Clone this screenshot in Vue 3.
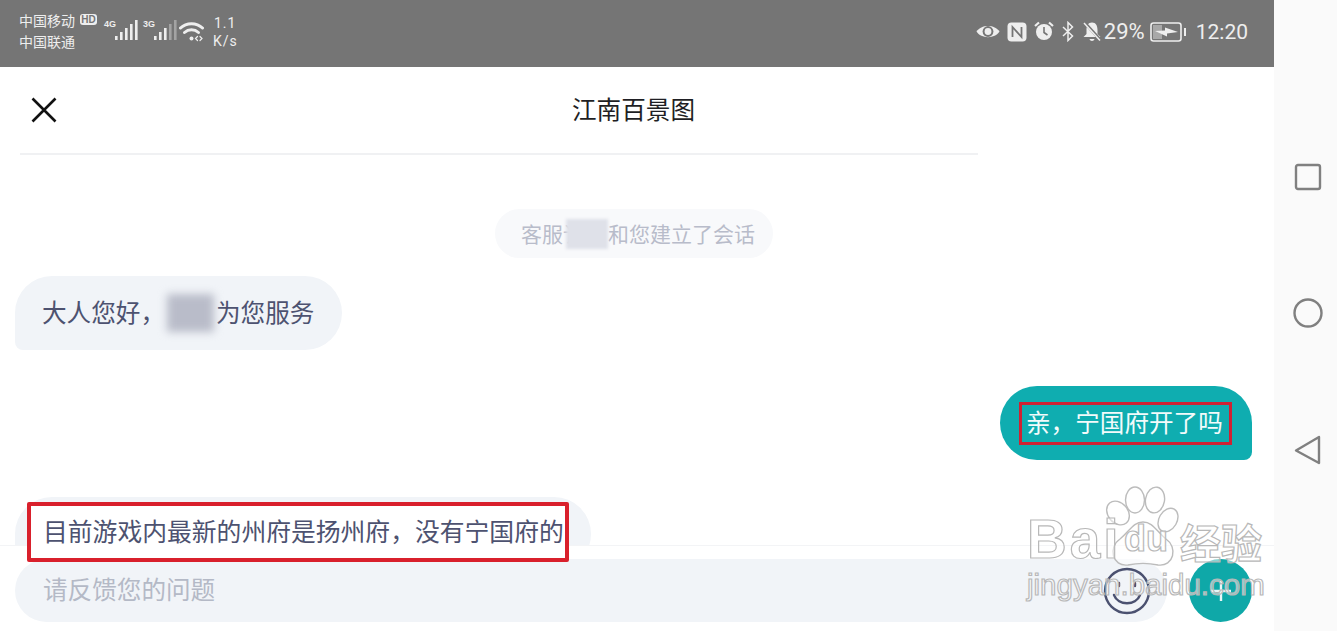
<script setup>
const signalBars = [
  { x: 0, h: 4 },
  { x: 5, h: 8 },
  { x: 10, h: 12 },
  { x: 15, h: 16 },
  { x: 20, h: 20 }
]
</script>

<template>
  <div class="screen">
    <div class="phone">
      <div class="status-bar">
        <div class="status-left">
          <div class="carriers">
            <div class="carrier-row">
              <span>中国移动</span>
              <span class="hd">HD</span>
            </div>
            <div class="carrier-row">中国联通</div>
          </div>
          <div class="net">
            <span class="net-label">4G</span>
            <svg class="bars" width="23" height="22" viewBox="0 0 23 22">
              <rect v-for="b in signalBars" :key="b.x" :x="b.x" :y="21 - b.h" width="2.6" :height="b.h" fill="#eee" />
            </svg>
          </div>
          <div class="net net-second">
            <span class="net-label">3G</span>
            <svg class="bars" width="23" height="22" viewBox="0 0 23 22">
              <rect v-for="b in signalBars" :key="b.x" :x="b.x" :y="21 - b.h" width="2.6" :height="b.h" :fill="b.x > 10 ? '#a3a3a3' : '#eee'" />
            </svg>
          </div>
          <svg class="wifi" width="25" height="21" viewBox="0 0 25 21" fill="none" stroke="#eee" stroke-width="3" stroke-linecap="round">
            <path d="M1.5 7 C7.5 1.2 17.5 1.2 23.5 7" />
            <path d="M5.5 11.500 C9.5 7.9 15.5 7.9 19.5 11.500" />
            <circle cx="12.500" cy="17.500" r="2" fill="#eee" stroke="none" />
            <path d="M18.5 15.500 L16.5 17.500 L18.5 19.500 M21 15.500 L23 17.500 L21 19.500" stroke-width="1.2" />
          </svg>
          <div class="speed">
            <div class="speed-num">1.1</div>
            <div>K/s</div>
          </div>
        </div>
        <div class="status-right">
          <svg width="24" height="17" viewBox="0 0 24 17">
            <path d="M0.5 8.5 C5 1 19 1 23.5 8.5 C19 16 5 16 0.5 8.5 Z" fill="#eee" />
            <circle cx="12" cy="8.5" r="5.4" fill="#757575" />
            <circle cx="12" cy="8.5" r="3.4" fill="#eee" />
          </svg>
          <svg class="gap-7" width="20" height="20" viewBox="0 0 20 20">
            <rect x="0.5" y="0.5" width="19" height="19" rx="4" fill="#eee" />
            <path d="M5.5 15 V5 L14.5 15 V5" fill="none" stroke="#757575" stroke-width="1.8" />
          </svg>
          <svg class="gap-7" width="20" height="21" viewBox="0 0 20 21">
            <circle cx="10" cy="11" r="8" fill="#eee" />
            <path d="M10 6 V11.5 L13.5 14" fill="none" stroke="#757575" stroke-width="1.6" />
            <path d="M1 5 L5 1.5 M19 5 L15 1.5" stroke="#eee" stroke-width="2.2" />
          </svg>
          <svg class="gap-8" width="12" height="21" viewBox="0 0 12 21" fill="none" stroke="#eee" stroke-width="1.5">
            <path d="M1 6 L10.5 15 L6 19.5 V1.5 L10.5 6 L1 15" />
          </svg>
          <svg class="gap-8" width="20" height="21" viewBox="0 0 20 21">
            <path d="M10 1.5 C14 1.5 15.5 5 15.5 9 V13 L18.5 16 H1.5 L4.5 13 V9 C4.5 5 6 1.5 10 1.5 Z" fill="#eee" />
            <path d="M7.5 18 H12.5 C12 20.5 8 20.5 7.5 18 Z" fill="#eee" />
            <path d="M2.5 1.5 L18.5 19" stroke="#757575" stroke-width="3" />
            <path d="M2 2 L18 19.5" stroke="#eee" stroke-width="1.5" />
          </svg>
          <span class="percent">29%</span>
          <svg class="gap-5" width="36" height="20" viewBox="0 0 36 20">
            <rect x="1" y="1" width="30" height="18" rx="2.5" fill="none" stroke="#eee" stroke-width="1.6" />
            <rect x="3" y="3" width="9" height="14" fill="#a8a8a8" />
            <path d="M5 9 L15 8.500 L15 5.500 L28 10 L17 11.500 L17 14.500 Z" fill="#eee" />
            <rect x="34" y="6" width="2" height="8" fill="#eee" />
          </svg>
          <span class="clock">12:20</span>
        </div>
      </div>

      <header class="head">
        <svg class="close" width="26" height="26" viewBox="0 0 26 26" fill="none" stroke="#111" stroke-width="2.6">
          <path d="M1.5 1.5 L24.5 24.5 M24.5 1.5 L1.5 24.5" />
        </svg>
        <h1 class="title">江南百景图</h1>
      </header>
      <div class="head-line"></div>

      <main class="messages">
        <div class="system">
          <span class="system-pill">客服讠<span class="blur-small"></span>和您建立了会话</span>
        </div>
        <div class="bubble from-them first">大人您好，<span class="blur-name"></span>为您服务</div>
        <div class="bubble from-me">
          <span class="mark">亲，宁国府开了吗</span>
        </div>
        <div class="bubble from-them third"></div>
      </main>

      <footer class="composer">
        <div class="input">
          <span class="placeholder">请反馈您的问题</span>
          <svg class="smile" width="48" height="48" viewBox="0 0 48 48" fill="none" stroke="#4b5170" stroke-width="2.4">
            <circle cx="24" cy="24" r="22" />
            <path d="M11 28 C15 39 33 39 37 28" stroke-linecap="round" />
            <path d="M16 16 V19 M32 16 V19" stroke-linecap="round" />
          </svg>
        </div>
        <button class="plus">
          <svg width="24" height="24" viewBox="0 0 24 24" stroke="#e8f7f7" stroke-width="2.4">
            <path d="M12 2 V22 M2 12 H22" />
          </svg>
        </button>
      </footer>

      <!-- red annotation box drawn over the cut off reply -->
      <div class="annotation">目前游戏内最新的州府是扬州府，没有宁国府的</div>
    </div>

    <aside class="nav">
      <svg width="28" height="28" viewBox="0 0 28 28" fill="none" stroke="#808080" stroke-width="2.4">
        <rect x="2" y="2" width="24" height="24" rx="2" />
      </svg>
      <svg width="30" height="30" viewBox="0 0 30 30" fill="none" stroke="#808080" stroke-width="2.4">
        <circle cx="15" cy="15" r="13.5" />
      </svg>
      <svg width="28" height="30" viewBox="0 0 28 30" fill="none" stroke="#808080" stroke-width="2.4" stroke-linejoin="round">
        <path d="M25 2 L2 15.500 L25 28 Z" />
      </svg>
    </aside>

    <!-- baidu jingyan watermark -->
    <div class="watermark">
      <svg class="paw" width="90" height="84" viewBox="0 0 90 84" fill="rgba(255,255,255,.55)" stroke="#bcbcbc" stroke-width="1.4">
        <ellipse cx="14" cy="28" rx="10" ry="13" transform="rotate(-40 14 28)" />
        <ellipse cx="31" cy="15" rx="9.500" ry="13" />
        <ellipse cx="51" cy="15" rx="9.500" ry="13" transform="rotate(10 51 15)" />
        <ellipse cx="64" cy="35" rx="9" ry="12.500" transform="rotate(30 64 35)" />
        <path d="M39 37 C49 37 52 46 62 54 C74 62 70 82 54 80 C45 78 33 78 24 80 C8 82 4 62 16 54 C26 46 29 37 39 37 Z" />
      </svg>
      <span class="wm wm-bai">Bai</span>
      <span class="wm wm-du">du</span>
      <span class="wm wm-cn">经验</span>
      <span class="wm wm-url">jingyan.baidu.com</span>
    </div>
  </div>
</template>

<style scoped>
.screen {
  position: relative;
  display: flex;
  width: 1337px;
  height: 631px;
  overflow: hidden;
  background: #fff;
  font-family: "Noto Sans CJK SC", "Noto Sans", sans-serif;
}
.phone {
  position: relative;
  display: flex;
  flex-direction: column;
  width: 1274px;
  height: 631px;
}

/* status bar */
.status-bar {
  display: flex;
  justify-content: space-between;
  align-items: center;
  flex: none;
  height: 67px;
  box-sizing: border-box;
  padding: 0 26px 0 19px;
  background: #757575;
  color: #eee;
}
.status-left {
  display: flex;
  align-items: center;
  margin-top: -7px;
}
.carriers {
  display: flex;
  flex-direction: column;
  gap: 3px;
  width: 85px;
  font-size: 14px;
  line-height: 18px;
}
.carrier-row {
  display: flex;
  align-items: center;
  gap: 5px;
  white-space: nowrap;
}
.hd {
  width: 17px;
  height: 11px;
  border-radius: 3px;
  background: #eee;
  color: #757575;
  font-family: "Liberation Sans", sans-serif;
  font-size: 10px;
  font-weight: 700;
  line-height: 11px;
  text-align: center;
}
.net {
  display: flex;
  align-items: flex-start;
  width: 33px;
}
.net-second {
  margin-left: 6px;
}
.net-label {
  width: 11px;
  margin-top: -1px;
  font-family: "Liberation Sans", sans-serif;
  font-size: 9px;
  font-weight: 700;
  line-height: 12px;
  white-space: nowrap;
}
.bars {
  flex: none;
}
.wifi {
  flex: none;
  margin-left: 3px;
  margin-top: 2px;
}
.speed {
  margin-top: 3px;
  margin-left: 9px;
  font-family: Roboto, sans-serif;
  font-size: 14px;
  line-height: 18px;
  letter-spacing: 1px;
}
.speed-num {
  padding-left: 1px;
}
.status-right {
  display: flex;
  align-items: center;
  margin-top: -4px;
}
.gap-7 {
  margin-left: 7px;
}
.gap-8 {
  margin-left: 8px;
}
.gap-5 {
  margin-left: 5px;
}
.percent,
.clock {
  font-family: Roboto, sans-serif;
  line-height: 24px;
}
.percent {
  margin-left: 2px;
  font-size: 22px;
}
.clock {
  margin-left: 10px;
  font-size: 21px;
}

/* header */
.head {
  display: flex;
  align-items: center;
  flex: none;
  height: 86px;
  box-sizing: border-box;
  padding: 0 64px 0 31px;
}
.close {
  flex: none;
  margin-top: -1px;
}
.title {
  flex: 1;
  margin: 0 0 4px;
  color: #1f1f24;
  font-size: 24.6px;
  font-weight: 400;
  text-align: center;
}
.head-line {
  flex: none;
  width: 958px;
  height: 2px;
  margin-left: 20px;
  background: #f0f1f3;
}

/* messages */
.messages {
  display: flex;
  flex-direction: column;
  flex: 1;
  min-height: 0;
  overflow: hidden;
  box-sizing: border-box;
  padding: 54px 22px 0 15px;
}
.system {
  display: flex;
  justify-content: flex-start;
  flex: none;
  margin-left: 480px;
}
.system-pill {
  display: flex;
  align-items: center;
  height: 49px;
  box-sizing: border-box;
  padding: 0 18px 2px 26px;
  border-radius: 25px;
  background: #f8f9fb;
  color: #b8bcca;
  font-size: 21px;
  white-space: nowrap;
}
.blur-small {
  display: inline-block;
  width: 42px;
  height: 30px;
  margin-left: -18px;
  margin-top: 2px;
  background: #dfe1e9;
  filter: blur(1.5px);
}
.bubble {
  display: flex;
  align-items: center;
  flex: none;
  height: 74px;
  box-sizing: border-box;
  font-size: 24.6px;
  white-space: nowrap;
}
.from-them {
  align-self: flex-start;
  background: #f1f4f8;
  color: #4d5270;
  border-radius: 37px 37px 37px 8px;
}
.first {
  width: 327px;
  margin-top: 18px;
  padding-left: 27px;
  padding-bottom: 4px;
}
.blur-name {
  display: inline-block;
  width: 47px;
  height: 38px;
  margin: 4px 2px 0 2px;
  background: #b9bcc9;
  filter: blur(4px);
}
.from-me {
  align-self: flex-end;
  justify-content: center;
  width: 252px;
  margin-top: 36px;
  background: #0fadb0;
  color: #f2fbfb;
  border-radius: 37px 37px 8px 37px;
}
.mark {
  display: block;
  box-sizing: border-box;
  width: 213px;
  height: 43px;
  margin-right: 1px;
  border: 3px solid #cf2233;
  padding-left: 4px;
  line-height: 33px;
  font-size: 24.6px;
}
.third {
  width: 576px;
  margin-top: 37px;
}

/* composer */
.composer {
  display: flex;
  align-items: flex-start;
  gap: 22px;
  flex: none;
  height: 86px;
  box-sizing: border-box;
  padding: 13px 22px 0 15px;
  border-top: 1px solid #f3f4f6;
  background: #fff;
}
.input {
  display: flex;
  align-items: center;
  justify-content: space-between;
  flex: 1;
  height: 63px;
  box-sizing: border-box;
  padding: 0 16px 0 28px;
  border-radius: 32px;
  background: #f1f4f8;
}
.placeholder {
  margin-bottom: 6px;
  color: #b4b9c6;
  font-size: 24.6px;
}
.smile {
  flex: none;
  margin-top: 1px;
}
.plus {
  display: flex;
  align-items: center;
  justify-content: center;
  flex: none;
  width: 63px;
  height: 63px;
  padding: 0;
  border: none;
  border-radius: 50%;
  background: #0fa8a8;
}

/* overlay annotation */
.annotation {
  position: absolute;
  left: 27px;
  top: 502px;
  width: 542px;
  height: 60px;
  box-sizing: border-box;
  padding-left: 12px;
  border: 4px solid #d9202c;
  border-radius: 2px;
  background: #fff;
  color: #4d5270;
  font-size: 24.8px;
  line-height: 48px;
  white-space: nowrap;
}

/* nav bar */
.nav {
  display: flex;
  flex-direction: column;
  align-items: center;
  gap: 107px;
  flex: 1;
  padding: 163px 0 0 5px;
  background: #fafafa;
}

/* watermark */
.watermark {
  position: absolute;
  left: 1020px;
  top: 480px;
  width: 250px;
  height: 125px;
}
.paw {
  position: absolute;
  left: 84px;
  top: 5px;
}
.wm {
  position: absolute;
  color: rgba(255, 255, 255, 0.5);
  font-family: "Liberation Sans", sans-serif;
  font-weight: 700;
  -webkit-text-stroke: 1.2px #b8b8b8;
  white-space: nowrap;
}
.wm-bai {
  left: 7px;
  top: 29px;
  font-size: 55px;
  line-height: 60px;
  letter-spacing: 3px;
}
.wm-du {
  left: 104px;
  top: 39px;
  font-size: 36px;
  line-height: 40px;
}
.wm-cn {
  left: 160px;
  top: 36px;
  font-family: "Noto Sans CJK SC", sans-serif;
  font-size: 41px;
  line-height: 50px;
}
.wm-url {
  left: 7px;
  top: 87px;
  font-weight: 400;
  font-size: 29.500px;
  line-height: 36px;
}
</style>
